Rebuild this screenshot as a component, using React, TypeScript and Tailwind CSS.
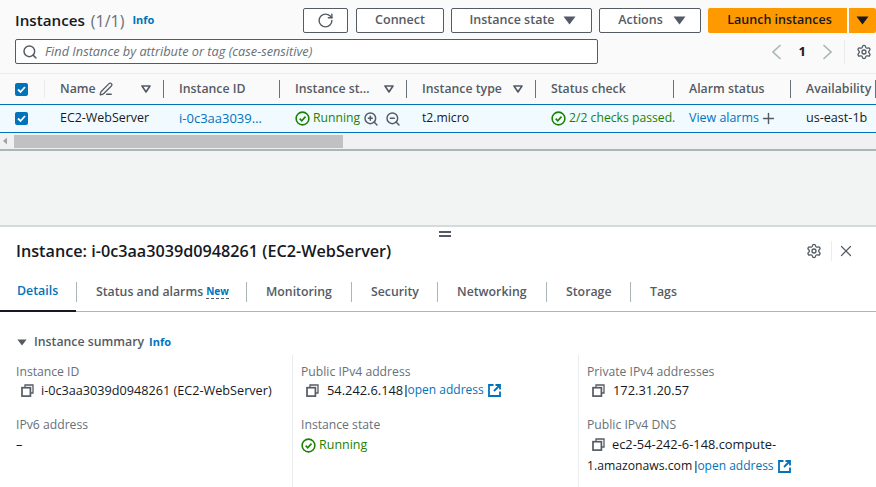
import { ReactNode } from "react";
import { Search, PenLine, X, Plus, ZoomIn, ZoomOut, RotateCw, Settings } from "lucide-react";

const font = { fontFamily: '"Open Sans", "Noto Sans", sans-serif' };

const Caret = ({ className = "" }: { className?: string }) => (
  <svg width="13" height="9" viewBox="0 0 13 9" className={className}>
    <path d="M0.5 0.5h12L6.5 8.5z" fill="currentColor" />
  </svg>
);

const FilterCaret = () => (
  <svg width="10" height="8" viewBox="0 0 10 8" className="text-[#545b64]">
    <path d="M1 1h8L5 7z" fill="none" stroke="currentColor" strokeWidth="1.6" strokeLinejoin="round" />
  </svg>
);

const Check = () => (
  <span className="flex h-[13px] w-[13px] items-center justify-center rounded-[2px] bg-[#0073bb]">
    <svg width="11" height="11" viewBox="0 0 11 11">
      <path d="M2 5.5l2.5 2.5L9 3" fill="none" stroke="white" strokeWidth="1.8" />
    </svg>
  </span>
);

const StatusOk = ({ size = 15 }: { size?: number }) => (
  <svg width={size} height={size} viewBox="0 0 16 16" className="shrink-0">
    <circle cx="8" cy="8" r="6.8" fill="none" stroke="#1d8102" strokeWidth="1.7" />
    <path d="M5 8.2l2.2 2.2L11.2 6" fill="none" stroke="#1d8102" strokeWidth="1.7" />
  </svg>
);

const Copy = () => (
  <svg width="13" height="13" viewBox="0 0 13 13" className="shrink-0 text-[#545b64]">
    <path d="M4 3V1h8v8h-2" fill="none" stroke="currentColor" strokeWidth="1.3" />
    <rect x="1" y="3.7" width="8.4" height="8.4" fill="none" stroke="currentColor" strokeWidth="1.7" />
  </svg>
);

const External = () => (
  <svg width="13" height="13" viewBox="0 0 13 13" className="ml-1 inline-block shrink-0 align-[-2px] text-[#0073bb]">
    <path d="M5.5 1H1v11h11V7.5" fill="none" stroke="currentColor" strokeWidth="1.8" />
    <path d="M7.5 1H12v4.5M12 1L6 7" fill="none" stroke="currentColor" strokeWidth="1.8" />
  </svg>
);

const Chevron = ({ flip }: { flip?: boolean }) => (
  <svg width="11" height="16" viewBox="0 0 11 16" className={`text-[#aab7b8] ${flip ? "rotate-180" : ""}`}>
    <path d="M9.5 1L2 8l7.5 7" fill="none" stroke="currentColor" strokeWidth="1.7" />
  </svg>
);

const Btn = ({ className = "", children }: { className?: string; children: ReactNode }) => (
  <button className={`flex h-[25px] items-center justify-center rounded-[2px] border border-[#545b64] bg-white text-[12.5px] font-semibold text-[#545b64] ${className}`}>
    {children}
  </button>
);

const HeadCell = ({ w, label, filter, edit }: { w: string; label: string; filter?: boolean; edit?: boolean }) => (
  <div className={`relative flex h-full shrink-0 items-center pr-[13px] pl-[15px] ${w}`}>
    <span className="text-[12.3px] font-semibold whitespace-nowrap text-[#545b64]">{label}</span>
    {edit && <PenLine size={14} className="ml-[3px] text-[#545b64]" strokeWidth={2.2} />}
    {filter && (
      <span className="ml-auto flex">
        <FilterCaret />
      </span>
    )}
    <span className="absolute top-[6px] right-0 h-[18px] w-px bg-[#687078]" />
  </div>
);

const Cell = ({ w, children, size = "text-[12.45px]" }: { w: string; children: ReactNode; size?: string }) => (
  <div className={`flex h-full shrink-0 items-center pl-[15px] whitespace-nowrap text-[#16191f] ${size} ${w}`}>{children}</div>
);

const TabSep = () => <span className="h-5 w-px shrink-0 bg-[#aab7b8]" />;

const Label = ({ children }: { children: ReactNode }) => <div className="text-[12.2px] leading-[18px] text-[#687078]">{children}</div>;

export default function App() {
  return (
    <div style={font} className="h-[487px] w-[876px] overflow-hidden bg-white">
      {/* Instances table */}
      <div className="bg-[#fafafa]">
        <div className="flex h-[39px] items-start pt-2">
          <div className="ml-[15px] flex h-[25px] items-center">
            <h1 className="text-[15.2px] font-semibold text-[#16191f]">Instances</h1>
            <span className="ml-[6px] text-[16px] text-[#687078]">(1/1)</span>
            <span className="ml-2 text-[11px] font-bold text-[#0073bb]">Info</span>
          </div>
          <div className="ml-auto flex">
            <Btn className="w-[45px]">
              <RotateCw size={17} strokeWidth={2} />
            </Btn>
            <Btn className="ml-[8px] w-[88px]">Connect</Btn>
            <Btn className="ml-[7px] w-[141px] gap-[8px] pl-[2px]">
              Instance state <Caret />
            </Btn>
            <Btn className="ml-[7px] w-[102px] gap-[10px] pl-[4px]">
              Actions <Caret />
            </Btn>
            <button className="ml-[7px] h-[25px] w-[139px] rounded-l-[2px] bg-[#ff9900] pl-[4px] text-[12.5px] font-semibold text-[#16191f]">Launch instances</button>
            <button className="ml-[2px] flex h-[25px] w-[27px] items-center justify-center rounded-r-[2px] bg-[#ff9900] text-[#16191f]">
              <Caret />
            </button>
          </div>
        </div>
        <div className="flex h-[34px] items-start">
          <div className="ml-[15px] flex h-[25px] w-[583px] items-center rounded-[2px] border border-[#545b64] bg-white pl-[6px]">
            <Search size={16} className="text-[#545b64]" strokeWidth={2.2} />
            <span className="ml-[7px] text-[12.75px] text-[#687078] italic">Find Instance by attribute or tag (case-sensitive)</span>
          </div>
          <div className="ml-auto flex h-[25px] items-center">
            <Chevron />
            <span className="ml-[17px] text-[13px] font-bold text-[#16191f]">1</span>
            <span className="ml-[16px] flex">
              <Chevron flip />
            </span>
            <span className="ml-[11px] h-6 w-px bg-[#eaeded]" />
            <Settings size={16} className="mr-[4px] ml-[11px] text-[#545b64]" strokeWidth={2} />
          </div>
        </div>
      </div>

      {/* Header */}
      <div className="flex h-[31px] overflow-hidden border-t border-[#eaeded] bg-[#fafafa]">
        <div className="relative flex h-full w-[45px] shrink-0 items-center pl-[15px]">
          <Check />
          <span className="absolute top-[6px] right-0 h-[18px] w-px bg-[#eaeded]" />
        </div>
        <HeadCell w="w-[119px]" label="Name" filter edit />
        <HeadCell w="w-[116px]" label="Instance ID" />
        <HeadCell w="w-[127px]" label="Instance st…" filter />
        <HeadCell w="w-[129px]" label="Instance type" filter />
        <HeadCell w="w-[138px]" label="Status check" />
        <HeadCell w="w-[117px]" label="Alarm status" />
        <HeadCell w="w-[85px]" label="Availability" />
      </div>

      {/* Selected row */}
      <div className="flex h-[29px] overflow-hidden border-y border-[#0073bb] bg-[#f1faff]">
        <div className="flex h-full w-[45px] shrink-0 items-center pl-[15px]">
          <Check />
        </div>
        <Cell w="w-[119px]">EC2-WebServer</Cell>
        <Cell w="w-[116px]" size="text-[13px]">
          <span className="text-[#0073bb]">i-0c3aa3039…</span>
        </Cell>
        <Cell w="w-[127px]" size="text-[12.2px]">
          <StatusOk />
          <span className="ml-[3px] text-[#1d8102]">Running</span>
          <ZoomIn size={16} className="ml-[3px] text-[#545b64]" strokeWidth={2.2} />
          <ZoomOut size={16} className="ml-[6px] text-[#545b64]" strokeWidth={2.2} />
        </Cell>
        <Cell w="w-[129px]" size="text-[12.2px]">t2.micro</Cell>
        <Cell w="w-[138px]" size="text-[12.2px]">
          <StatusOk />
          <span className="ml-[3px] text-[#1d8102]">2/2 checks passed.</span>
        </Cell>
        <Cell w="w-[117px]">
          <span className="text-[#0073bb]">View alarms</span>
          <Plus size={17} className="ml-[1px] text-[#545b64]" strokeWidth={2} />
        </Cell>
        <Cell w="w-[85px]" size="text-[12.6px]">us-east-1b</Cell>
      </div>

      {/* Horizontal scrollbar */}
      <div className="flex h-[18px] items-center border-b-2 border-[#aab7b8] bg-[#f1f1f1]">
        <svg width="14" height="16" viewBox="0 0 14 16" className="shrink-0">
          <path d="M3 8l4-3.5v7z" fill="#a3a3a3" />
        </svg>
        <div className="h-[13px] w-[329px] bg-[#c1c1c1]" />
      </div>

      {/* Split gap */}
      <div className="h-[74px] bg-[#f2f3f3]" />

      {/* Split panel */}
      <div className="relative border-t-2 border-[#d5dbdb] bg-white">
        <div className="absolute top-[4px] left-[439px] h-[6px] w-[12px] border-y-2 border-[#545b64]" />
        <div className="flex h-[47px] items-center pt-[1px] pl-4">
          <h2 className="text-[16.2px] font-semibold text-[#16191f]">Instance: i-0c3aa3039d0948261 (EC2-WebServer)</h2>
          <Settings size={16} className="ml-auto text-[#545b64]" strokeWidth={2} />
          <span className="ml-[9px] h-5 w-px bg-[#eaeded]" />
          <X size={18} className="mr-[21px] ml-[5px] text-[#545b64]" strokeWidth={1.6} />
        </div>
        <div className="flex h-[38px] items-center border-b border-[#aab7b8] pb-[1px]">
          <div className="-mb-[1px] flex h-[38px] w-[76px] shrink-0 items-center border-b-2 border-[#16191f] pl-[17px]">
            <span className="text-[12.4px] font-semibold text-[#0073bb]">Details</span>
          </div>
          <TabSep />
          <div className="flex w-[169px] shrink-0 items-center pl-[19px]">
            <span className="text-[12.3px] font-semibold whitespace-nowrap text-[#545b64]">Status and alarms</span>
            <span className="ml-[3px] border-b border-dashed border-[#545b64] text-[10px] leading-[13px] font-bold text-[#0073bb]">New</span>
          </div>
          <TabSep />
          <div className="w-[104px] shrink-0 pl-[19px] text-[12.3px] font-semibold text-[#545b64]">Monitoring</div>
          <TabSep />
          <div className="w-[85px] shrink-0 pl-[19px] text-[12.3px] font-semibold text-[#545b64]">Security</div>
          <TabSep />
          <div className="w-[108px] shrink-0 pl-[19px] text-[12.3px] font-semibold text-[#545b64]">Networking</div>
          <TabSep />
          <div className="w-[83px] shrink-0 pl-[19px] text-[12.3px] font-semibold text-[#545b64]">Storage</div>
          <TabSep />
          <div className="w-[60px] shrink-0 pl-[19px] text-[12.3px] font-semibold text-[#545b64]">Tags</div>
        </div>

        <div className="mt-[21px] flex h-[18px] items-center pl-[17px]">
          <Caret className="h-[7px] w-[10px] text-[#545b64]" />
          <span className="ml-[7px] text-[12.3px] font-semibold text-[#545b64]">Instance summary</span>
          <span className="ml-[5px] text-[11px] font-bold text-[#0073bb]">Info</span>
        </div>

        <div className="mt-[4px] flex h-[140px]">
          <div className="w-[293px] shrink-0 border-r border-[#eaeded] pt-[8px] pl-4">
            <Label>Instance ID</Label>
            <div className="flex items-center pl-[5px] text-[12.67px] leading-[18px] whitespace-nowrap text-[#16191f]">
              <Copy />
              <span className="ml-[7px]">i-0c3aa3039d0948261 (EC2-WebServer)</span>
            </div>
            <div className="mt-[17px]">
              <Label>IPv6 address</Label>
            </div>
            <div className="mt-[1px] text-[13px] leading-[18px] text-[#16191f]">–</div>
          </div>
          <div className="w-[286px] shrink-0 border-r border-[#eaeded] pt-[8px] pl-2">
            <Label>Public IPv4 address</Label>
            <div className="flex items-center pl-[5px] text-[12.85px] leading-[18px] whitespace-nowrap text-[#16191f]">
              <Copy />
              <span className="ml-[8px]">54.242.6.148</span>
              <span className="ml-[1px] font-['Liberation_Sans']">|</span>
              <span className="text-[12px] text-[#0073bb]">open address</span>
              <External />
            </div>
            <div className="mt-[17px]">
              <Label>Instance state</Label>
            </div>
            <div className="mt-[2px] flex items-center text-[12.5px] leading-[18px] text-[#1d8102]">
              <StatusOk />
              <span className="ml-[3px]">Running</span>
            </div>
          </div>
          <div className="flex-1 pt-[8px] pl-2">
            <Label>Private IPv4 addresses</Label>
            <div className="flex items-center pl-[5px] text-[12.85px] leading-[18px] text-[#16191f]">
              <Copy />
              <span className="ml-[8px]">172.31.20.57</span>
            </div>
            <div className="mt-[17px]">
              <Label>Public IPv4 DNS</Label>
            </div>
            <div className="flex items-center pl-[5px] text-[12.85px] leading-[20px] whitespace-nowrap text-[#16191f]">
              <Copy />
              <span className="ml-[7px]">ec2-54-242-6-148.compute-</span>
            </div>
            <div className="mt-[2px] flex items-center text-[12.2px] leading-[20px] whitespace-nowrap text-[#16191f]">
              <span>1.amazonaws.com</span>
              <span className="ml-[2px] font-['Liberation_Sans']">|</span>
              <span className="text-[12px] text-[#0073bb]">open address</span>
              <External />
            </div>
          </div>
        </div>
      </div>
    </div>
  );
}
